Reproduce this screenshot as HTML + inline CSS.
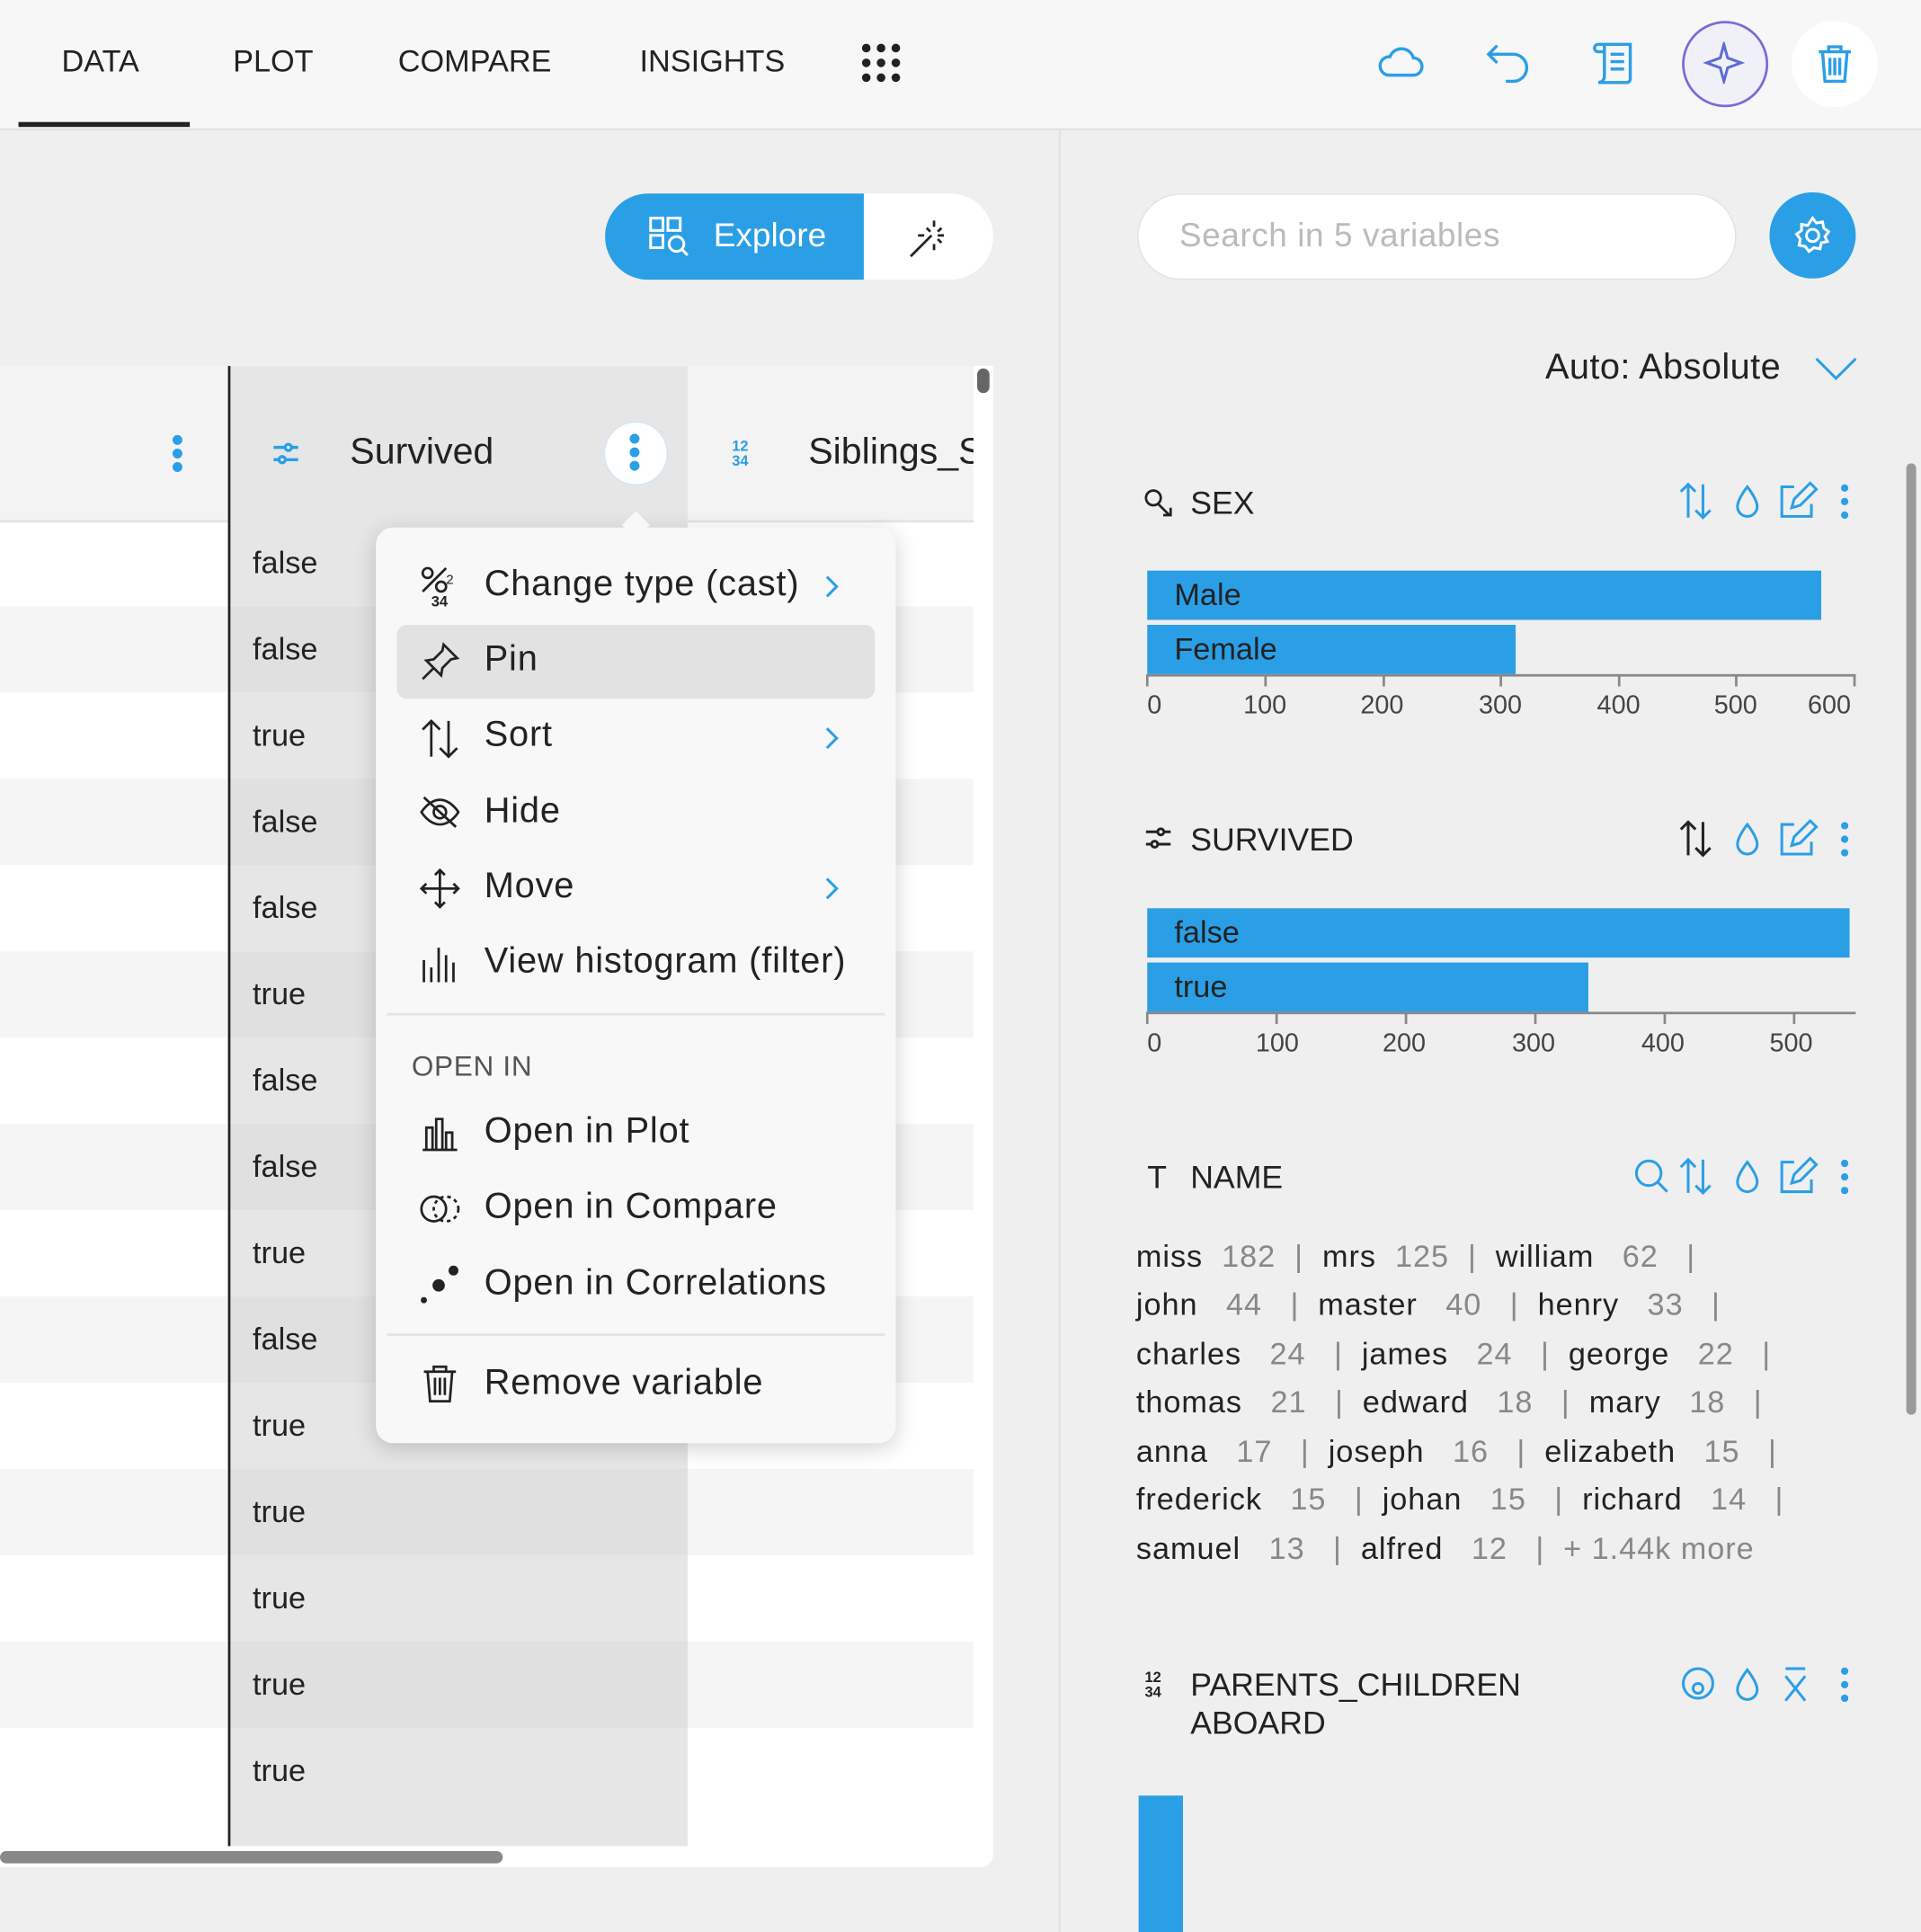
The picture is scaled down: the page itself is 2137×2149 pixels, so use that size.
<!DOCTYPE html>
<html><head><meta charset="utf-8"><style>
html,body{margin:0;padding:0;width:2137px;height:2149px;overflow:hidden;background:#efefef;font-family:"Liberation Sans",sans-serif;color:#222}
#s{position:absolute;left:0;top:0;width:1559px;height:1568px;transform:scale(1.3708);transform-origin:0 0;background:#efefef}
.a{position:absolute}
.tab{position:absolute;top:36px;font-size:25px;color:#222}
.row{position:absolute;left:0;width:790px;height:70px}
.val{position:absolute;left:205px;font-size:25px;color:#222}
.mi{position:absolute;left:393px;font-size:29px;color:#222;letter-spacing:0.6px}
.ic{position:absolute}
.nm{position:absolute;font-size:25px;color:#222;white-space:pre;letter-spacing:0.7px}
.nm span{color:#888}
.tick{position:absolute;font-size:21px;color:#444}
.bar{position:absolute;background:#2b9fe6;color:#222;font-size:25px;line-height:40px;padding-left:22px;box-sizing:border-box}
</style></head><body><div id="s">
<div class="a" style="left:0;top:0;width:1559px;height:104px;background:#f7f7f7;border-bottom:2px solid #e2e2e2"></div>
<div class="tab" style="left:50px">DATA</div>
<div class="tab" style="left:189px">PLOT</div>
<div class="tab" style="left:323px">COMPARE</div>
<div class="tab" style="left:519px">INSIGHTS</div>
<div class="a" style="left:15px;top:99px;width:139px;height:4px;background:#222"></div>
<svg class="a" style="left:698px;top:34px" width="36" height="36"><g fill="#222"><circle cx="5" cy="5" r="3.5"/><circle cx="17" cy="5" r="3.5"/><circle cx="29" cy="5" r="3.5"/><circle cx="5" cy="17" r="3.5"/><circle cx="17" cy="17" r="3.5"/><circle cx="29" cy="17" r="3.5"/><circle cx="5" cy="29" r="3.5"/><circle cx="17" cy="29" r="3.5"/><circle cx="29" cy="29" r="3.5"/></g></svg>
<svg class="a" style="left:1118px;top:36px" width="38" height="30" fill="none" stroke="#2b9fe6" stroke-width="2.5"><path d="M9 25h20a7 7 0 0 0 0-14 10 10 0 0 0-19-1A7.5 7.5 0 0 0 9 25z"/></svg>
<svg class="a" style="left:1205px;top:33px" width="38" height="36" fill="none" stroke="#2b9fe6" stroke-width="2.5"><path d="M10 4 3 11l7 7M3 11h20a11 11 0 0 1 0 22h-6"/></svg>
<svg class="a" style="left:1292px;top:32px" width="40" height="38" fill="none" stroke="#2b9fe6" stroke-width="2.5"><path d="M5 4h26v28a3 3 0 0 1-3 3H8M5 4a3 3 0 0 0 0 6h5M10 4v26a5 5 0 0 1-5 5h23M15 12h11M15 18h11M15 24h11"/></svg>
<div class="a" style="left:1365px;top:17px;width:66px;height:66px;border-radius:50%;border:2px solid #7d6bd6;background:#f0f0f8"></div>
<svg class="a" style="left:1382px;top:34px" width="34" height="34" fill="none" stroke="#5c6bd6" stroke-width="2.2"><path d="M17 2 20 13 31 17 20 21 17 32 14 21 3 17 14 13z"/></svg>
<div class="a" style="left:1454px;top:17px;width:70px;height:70px;border-radius:50%;background:#fff"></div>
<svg class="a" style="left:1473px;top:35px" width="32" height="34" fill="none" stroke="#2b9fe6" stroke-width="2.5"><path d="M3 7h26M11 7V3h10v4M6 7l2 24h16l2-24M12 12v14M16 12v14M20 12v14"/></svg>
<div class="a" style="left:859px;top:106px;width:2px;height:1462px;background:#e3e3e3"></div>
<div class="a" style="left:491px;top:157px;width:315px;height:70px;border-radius:35px;background:#fff"></div>
<div class="a" style="left:491px;top:157px;width:210px;height:70px;border-radius:35px 0 0 35px;background:#2b9fe6"></div>
<svg class="a" style="left:526px;top:175px" width="36" height="34" fill="none" stroke="#fff" stroke-width="2.2"><rect x="2" y="2" width="10" height="10"/><rect x="16" y="2" width="10" height="10"/><rect x="2" y="16" width="10" height="10"/><circle cx="23" cy="23" r="6"/><path d="M27 27l5 5"/></svg>
<div class="a" style="left:579px;top:176px;font-size:27px;color:#fff">Explore</div>
<svg class="a" style="left:736px;top:175px" width="36" height="36" fill="none" stroke="#222" stroke-width="2"><path d="M3 33 20 16M22 4v5M22 23v5M30 16h-5M14 16h-5M28 10l-3 3M28 22l-3-3M16 10l3 3"/></svg>
<div class="a" style="left:0;top:297px;width:806px;height:1218px;background:#fff;border-radius:0 0 10px 0"></div>
<div class="a" style="left:0;top:297px;width:806px;height:125px;background:#f3f3f3;border-bottom:2px solid #e4e4e4"></div>
<div class="a" style="left:186px;top:297px;width:372px;height:1201px;background:#e6e6e6"></div>
<div class="row" style="top:492px;background:#f5f5f5"></div>
<div class="row" style="top:632px;background:#f5f5f5"></div>
<div class="row" style="top:772px;background:#f5f5f5"></div>
<div class="row" style="top:912px;background:#f5f5f5"></div>
<div class="row" style="top:1052px;background:#f5f5f5"></div>
<div class="row" style="top:1192px;background:#f5f5f5"></div>
<div class="row" style="top:1332px;background:#f5f5f5"></div>
<div class="a" style="left:186px;top:492px;width:372px;height:70px;background:#e0e0e0"></div>
<div class="a" style="left:186px;top:632px;width:372px;height:70px;background:#e0e0e0"></div>
<div class="a" style="left:186px;top:772px;width:372px;height:70px;background:#e0e0e0"></div>
<div class="a" style="left:186px;top:912px;width:372px;height:70px;background:#e0e0e0"></div>
<div class="a" style="left:186px;top:1052px;width:372px;height:70px;background:#e0e0e0"></div>
<div class="a" style="left:186px;top:1192px;width:372px;height:70px;background:#e0e0e0"></div>
<div class="a" style="left:186px;top:1332px;width:372px;height:70px;background:#e0e0e0"></div>
<div class="a" style="left:185px;top:297px;width:2px;height:1201px;background:#222"></div>
<svg class="a" style="left:138px;top:352px" width="12" height="34" fill="#2b9fe6"><circle cx="6" cy="5" r="4"/><circle cx="6" cy="16" r="4"/><circle cx="6" cy="27" r="4"/></svg>
<svg class="a" style="left:220px;top:357px" width="24" height="22" fill="none" stroke="#2b9fe6" stroke-width="2.5"><path d="M2 6h20M2 16h20"/><circle cx="14" cy="6" r="2.5" fill="#fff"/><circle cx="9" cy="16" r="2.5" fill="#fff"/></svg>
<div class="a" style="left:284px;top:350px;font-size:30px">Survived</div>
<div class="a" style="left:490px;top:342px;width:50px;height:50px;border-radius:50%;background:#fff;border:1px solid #cfe6f7"></div>
<svg class="a" style="left:509px;top:350px" width="12" height="34" fill="#2b9fe6"><circle cx="6" cy="6" r="4"/><circle cx="6" cy="17" r="4"/><circle cx="6" cy="28" r="4"/></svg>
<div class="a" style="left:594px;top:356px;font-size:12px;color:#2b9fe6;line-height:12px;font-weight:bold">12<br>34</div>
<div class="a" style="left:656px;top:350px;font-size:30px">Siblings_S</div>
<div class="a" style="left:790px;top:297px;width:16px;height:1218px;background:#fff;border-radius:0 0 10px 0"></div>
<div class="a" style="left:793px;top:299px;width:10px;height:20px;border-radius:5px;background:#666"></div>
<div class="val" style="top:443px">false</div>
<div class="val" style="top:513px">false</div>
<div class="val" style="top:583px">true</div>
<div class="val" style="top:653px">false</div>
<div class="val" style="top:723px">false</div>
<div class="val" style="top:793px">true</div>
<div class="val" style="top:863px">false</div>
<div class="val" style="top:933px">false</div>
<div class="val" style="top:1003px">true</div>
<div class="val" style="top:1073px">false</div>
<div class="val" style="top:1143px">true</div>
<div class="val" style="top:1213px">true</div>
<div class="val" style="top:1283px">true</div>
<div class="val" style="top:1353px">true</div>
<div class="val" style="top:1423px">true</div>
<div class="a" style="left:0;top:1502px;width:408px;height:10px;border-radius:5px;background:#888"></div>
<div class="a" style="left:305px;top:428px;width:422px;height:743px;background:#f8f8f8;border-radius:14px;box-shadow:0 4px 18px rgba(0,0,0,.18)"></div>
<div class="a" style="left:508px;top:418px;width:16px;height:16px;background:#f8f8f8;transform:rotate(45deg)"></div>
<div class="a" style="left:322px;top:507px;width:388px;height:60px;border-radius:8px;background:#e2e2e2"></div>
<svg class="ic" style="left:340px;top:458px" width="36" height="36" fill="none" stroke="#222" stroke-width="2"><circle cx="7" cy="7" r="4"/><circle cx="18" cy="18" r="4"/><path d="M3 22 22 3"/><text x="22" y="16" font-size="11" fill="#222" stroke="none" font-family="Liberation Sans">2</text><text x="10" y="34" font-size="12" fill="#222" stroke="none" font-family="Liberation Sans" font-weight="bold">34</text></svg>
<div class="mi" style="top:458px">Change type (cast)</div>
<svg class="ic" style="left:340px;top:520px" width="34" height="34" fill="none" stroke="#222" stroke-width="2"><path d="M20 3 31 14 26 15 19 22 18 28 6 16 12 15 19 8zM12 22 3 31"/></svg>
<div class="mi" style="top:519px">Pin</div>
<svg class="ic" style="left:340px;top:582px" width="34" height="34" fill="none" stroke="#222" stroke-width="2"><path d="M10 32V3M3 10l7-7 7 7M24 3v29M17 25l7 7 7-7"/></svg>
<div class="mi" style="top:580px">Sort</div>
<svg class="ic" style="left:340px;top:644px" width="34" height="30" fill="none" stroke="#222" stroke-width="2"><path d="M2 15s6-10 15-10 15 10 15 10-6 10-15 10S2 15 2 15z"/><circle cx="17" cy="15" r="5"/><path d="M4 3l26 24"/></svg>
<div class="mi" style="top:642px">Hide</div>
<svg class="ic" style="left:340px;top:704px" width="34" height="34" fill="none" stroke="#222" stroke-width="2"><path d="M17 2v30M2 17h30M13 6l4-4 4 4M13 28l4 4 4-4M6 13l-4 4 4 4M28 13l4 4-4 4"/></svg>
<div class="mi" style="top:703px">Move</div>
<svg class="ic" style="left:340px;top:765px" width="34" height="34" fill="none" stroke="#222" stroke-width="2"><path d="M4 14v18M10 20v12M16 4v28M22 10v22M28 16v16"/></svg>
<div class="mi" style="top:764px">View histogram (filter)</div>
<svg class="a" style="left:668px;top:465px" width="14" height="22" fill="none" stroke="#2b9fe6" stroke-width="2.2"><path d="M3 3l8 8-8 8"/></svg>
<svg class="a" style="left:668px;top:588px" width="14" height="22" fill="none" stroke="#2b9fe6" stroke-width="2.2"><path d="M3 3l8 8-8 8"/></svg>
<svg class="a" style="left:668px;top:710px" width="14" height="22" fill="none" stroke="#2b9fe6" stroke-width="2.2"><path d="M3 3l8 8-8 8"/></svg>
<div class="a" style="left:314px;top:822px;width:404px;height:2px;background:#e4e4e4"></div>
<div class="a" style="left:334px;top:852px;font-size:23px;color:#555;letter-spacing:0.5px">OPEN IN</div>
<svg class="ic" style="left:340px;top:903px" width="34" height="34" fill="none" stroke="#222" stroke-width="2"><path d="M3 30h28M6 30V12h5v18M14 30V5h5v25M22 30V16h5v14"/></svg>
<div class="mi" style="top:902px">Open in Plot</div>
<svg class="ic" style="left:340px;top:966px" width="34" height="30" fill="none" stroke="#222" stroke-width="2"><circle cx="12" cy="15" r="10"/><circle cx="22" cy="15" r="10" stroke-dasharray="3 3"/></svg>
<div class="mi" style="top:963px">Open in Compare</div>
<svg class="ic" style="left:340px;top:1026px" width="34" height="34" fill="#222"><circle cx="28" cy="5" r="4"/><circle cx="16" cy="17" r="5"/><circle cx="4" cy="29" r="2.5"/></svg>
<div class="mi" style="top:1025px">Open in Correlations</div>
<div class="a" style="left:314px;top:1082px;width:404px;height:2px;background:#e4e4e4"></div>
<svg class="ic" style="left:341px;top:1106px" width="32" height="34" fill="none" stroke="#222" stroke-width="2"><path d="M3 7h26M11 7V3h10v4M6 7l2 24h16l2-24M12 12v14M16 12v14M20 12v14"/></svg>
<div class="mi" style="top:1106px">Remove variable</div>
<div class="a" style="left:923px;top:157px;width:486px;height:70px;border-radius:35px;background:#fff;border:1px solid #e2e2e2;box-sizing:border-box"></div>
<div class="a" style="left:957px;top:176px;font-size:27px;color:#bbb;letter-spacing:0.4px">Search in 5 variables</div>
<div class="a" style="left:1436px;top:156px;width:70px;height:70px;border-radius:50%;background:#2b9fe6"></div>
<svg class="a" style="left:1454px;top:174px" width="34" height="34" fill="none" stroke="#fff" stroke-width="2.2"><circle cx="17" cy="17" r="5"/><path d="M17 3l3 4 5-1 1 5 4 3-3 4 2 4-5 1-1 5-5-1-4 3-3-4-5-1 1-5-3-4 4-3 0-5 5 1z"/></svg>
<div class="a" style="left:1254px;top:282px;font-size:29px;letter-spacing:0.3px">Auto: Absolute</div>
<svg class="a" style="left:1472px;top:288px" width="36" height="22" fill="none" stroke="#2b9fe6" stroke-width="2.2"><path d="M2 3l16 16L34 3"/></svg>
<div class="a" style="left:1547px;top:376px;width:8px;height:772px;border-radius:4px;background:#9a9a9a"></div>
<svg class="a" style="left:928px;top:396px" width="24" height="26" fill="none" stroke="#222" stroke-width="2"><circle cx="8" cy="8" r="6"/><path d="M12 13l9 9M16 22h6v-6"/></svg>
<div class="a" style="left:966px;top:393px;font-size:26px">SEX</div>
<svg class="a" style="left:929px;top:670px" width="22" height="20" fill="none" stroke="#222" stroke-width="2.2"><path d="M1 5h20M1 15h20"/><circle cx="13" cy="5" r="2.5" fill="#efefef"/><circle cx="8" cy="15" r="2.5" fill="#efefef"/></svg>
<div class="a" style="left:966px;top:666px;font-size:26px">SURVIVED</div>
<div class="a" style="left:931px;top:940px;font-size:26px">T</div>
<div class="a" style="left:966px;top:940px;font-size:26px">NAME</div>
<div class="a" style="left:929px;top:1355px;font-size:12px;line-height:12px;font-weight:bold">12<br>34</div>
<div class="a" style="left:966px;top:1352px;font-size:26px;line-height:31px">PARENTS_CHILDREN<br>ABOARD</div>
<svg class="a" style="left:1360px;top:390px" width="150" height="34" fill="none" stroke="#2b9fe6" stroke-width="2.2"><path d="M10 30V3M4 9l6-6 6 6M22 3v27M16 24l6 6 6-6"/><path d="M58 5s-8 10-8 16a8 8 0 0 0 16 0c0-6-8-16-8-16z"/><path d="M96 5H86v24h24V19M94 22l2-7 13-13 5 5-13 13z"/><circle cx="137" cy="6" r="3" fill="#2b9fe6" stroke="none"/><circle cx="137" cy="17" r="3" fill="#2b9fe6" stroke="none"/><circle cx="137" cy="28" r="3" fill="#2b9fe6" stroke="none"/></svg>
<svg class="a" style="left:1360px;top:664px" width="150" height="34" fill="none" stroke="#2b9fe6" stroke-width="2.2"><path d="M10 30V3M4 9l6-6 6 6M22 3v27M16 24l6 6 6-6" stroke="#222"/><path d="M58 5s-8 10-8 16a8 8 0 0 0 16 0c0-6-8-16-8-16z"/><path d="M96 5H86v24h24V19M94 22l2-7 13-13 5 5-13 13z"/><circle cx="137" cy="6" r="3" fill="#2b9fe6" stroke="none"/><circle cx="137" cy="17" r="3" fill="#2b9fe6" stroke="none"/><circle cx="137" cy="28" r="3" fill="#2b9fe6" stroke="none"/></svg>
<svg class="a" style="left:1322px;top:938px" width="190" height="34" fill="none" stroke="#2b9fe6" stroke-width="2.2"><circle cx="16" cy="14" r="10"/><path d="M23 21l8 8"/><path d="M48 30V3M42 9l6-6 6 6M60 3v27M54 24l6 6 6-6"/><path d="M96 5s-8 10-8 16a8 8 0 0 0 16 0c0-6-8-16-8-16z"/><path d="M134 5h-10v24h24V19M132 22l2-7 13-13 5 5-13 13z"/><circle cx="175" cy="6" r="3" fill="#2b9fe6" stroke="none"/><circle cx="175" cy="17" r="3" fill="#2b9fe6" stroke="none"/><circle cx="175" cy="28" r="3" fill="#2b9fe6" stroke="none"/></svg>
<svg class="a" style="left:1360px;top:1350px" width="150" height="34" fill="none" stroke="#2b9fe6" stroke-width="2.2"><circle cx="18" cy="16" r="12"/><circle cx="18" cy="20" r="4"/><path d="M58 5s-8 10-8 16a8 8 0 0 0 16 0c0-6-8-16-8-16z"/><path d="M89 4h16M89 30l16-20M89 10l16 20"/><circle cx="137" cy="6" r="3" fill="#2b9fe6" stroke="none"/><circle cx="137" cy="17" r="3" fill="#2b9fe6" stroke="none"/><circle cx="137" cy="28" r="3" fill="#2b9fe6" stroke="none"/></svg>
<div class="bar" style="left:931px;top:463px;width:547px;height:40px">Male</div>
<div class="bar" style="left:931px;top:507px;width:299px;height:40px">Female</div>
<div class="a" style="left:931px;top:547px;width:575px;height:2px;background:#888"></div>
<svg class="a" style="left:930px;top:547px" width="580" height="12" stroke="#888" stroke-width="2"><path d="M1 0v10M97 0v10M193 0v10M288 0v10M384 0v10M479 0v10M575 0v10"/></svg>
<div class="tick" style="left:931px;top:561px">0</div><div class="tick" style="left:1009px;top:561px">100</div><div class="tick" style="left:1104px;top:561px">200</div><div class="tick" style="left:1200px;top:561px">300</div><div class="tick" style="left:1296px;top:561px">400</div><div class="tick" style="left:1391px;top:561px">500</div><div class="tick" style="left:1467px;top:561px">600</div>
<div class="bar" style="left:931px;top:737px;width:570px;height:40px">false</div>
<div class="bar" style="left:931px;top:781px;width:358px;height:40px">true</div>
<div class="a" style="left:931px;top:821px;width:575px;height:2px;background:#888"></div>
<svg class="a" style="left:930px;top:821px" width="580" height="12" stroke="#888" stroke-width="2"><path d="M1 0v10M106 0v10M211 0v10M316 0v10M421 0v10M526 0v10"/></svg>
<div class="tick" style="left:931px;top:835px">0</div><div class="tick" style="left:1019px;top:835px">100</div><div class="tick" style="left:1122px;top:835px">200</div><div class="tick" style="left:1227px;top:835px">300</div><div class="tick" style="left:1332px;top:835px">400</div><div class="tick" style="left:1436px;top:835px">500</div>
<div class="nm" style="left:922px;top:1006px">miss  <span>182</span>  <span>|</span>  mrs  <span>125</span>  <span>|</span>  william   <span>62</span>   <span>|</span></div>
<div class="nm" style="left:922px;top:1045px">john   <span>44</span>   <span>|</span>  master   <span>40</span>   <span>|</span>  henry   <span>33</span>   <span>|</span></div>
<div class="nm" style="left:922px;top:1085px">charles   <span>24</span>   <span>|</span>  james   <span>24</span>   <span>|</span>  george   <span>22</span>   <span>|</span></div>
<div class="nm" style="left:922px;top:1124px">thomas   <span>21</span>   <span>|</span>  edward   <span>18</span>   <span>|</span>  mary   <span>18</span>   <span>|</span></div>
<div class="nm" style="left:922px;top:1164px">anna   <span>17</span>   <span>|</span>  joseph   <span>16</span>   <span>|</span>  elizabeth   <span>15</span>   <span>|</span></div>
<div class="nm" style="left:922px;top:1203px">frederick   <span>15</span>   <span>|</span>  johan   <span>15</span>   <span>|</span>  richard   <span>14</span>   <span>|</span></div>
<div class="nm" style="left:922px;top:1243px">samuel   <span>13</span>   <span>|</span>  alfred   <span>12</span>   <span>|</span>  <span>+ 1.44k more</span></div>
<div class="a" style="left:924px;top:1457px;width:36px;height:111px;background:#2b9fe6"></div>
</div></body></html>
